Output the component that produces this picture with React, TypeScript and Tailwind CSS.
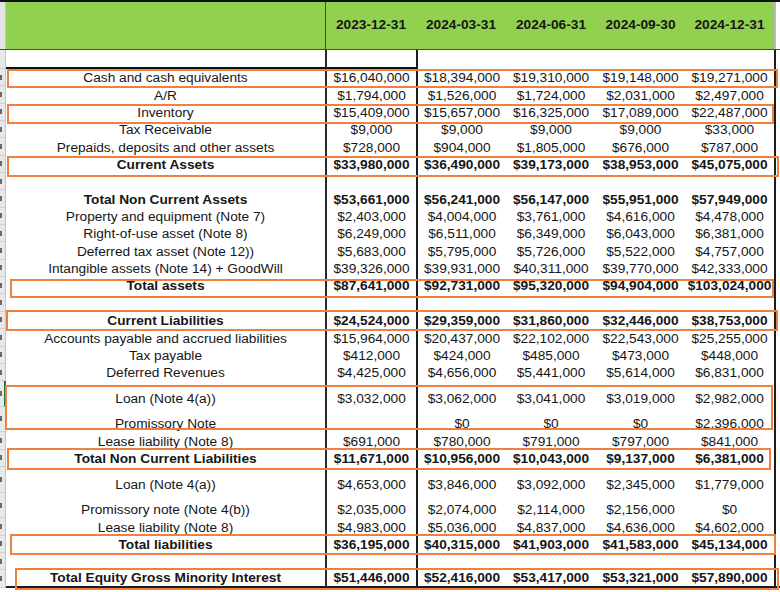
const DATES = ["2023-12-31", "2024-03-31", "2024-06-31", "2024-09-30", "2024-12-31"];

// widths of the five value columns (first and last carry the black rule)
const COLS = [
  "w-[91px] border-r-2 border-[#1c1c1c]",
  "w-[88px]",
  "w-[90px]",
  "w-[89px]",
  "w-[91px] border-r-2 border-[#1c1c1c]",
];

type Row = {
  label: string;
  vals: string[];
  bold?: boolean;
  h?: string;
};

const N = "h-[17.35px]";

const rows: Row[] = [
  { label: "Cash and cash equivalents", vals: ["$16,040,000", "$18,394,000", "$19,310,000", "$19,148,000", "$19,271,000"] },
  { label: "A/R", vals: ["$1,794,000", "$1,526,000", "$1,724,000", "$2,031,000", "$2,497,000"] },
  { label: "Inventory", vals: ["$15,409,000", "$15,657,000", "$16,325,000", "$17,089,000", "$22,487,000"] },
  { label: "Tax Receivable", vals: ["$9,000", "$9,000", "$9,000", "$9,000", "$33,000"] },
  { label: "Prepaids, deposits and other assets", vals: ["$728,000", "$904,000", "$1,805,000", "$676,000", "$787,000"] },
  { label: "Current Assets", bold: true, vals: ["$33,980,000", "$36,490,000", "$39,173,000", "$38,953,000", "$45,075,000"] },
  { label: "", vals: ["", "", "", "", ""] },
  { label: "Total Non Current Assets", bold: true, vals: ["$53,661,000", "$56,241,000", "$56,147,000", "$55,951,000", "$57,949,000"] },
  { label: "Property and equipment (Note 7)", vals: ["$2,403,000", "$4,004,000", "$3,761,000", "$4,616,000", "$4,478,000"] },
  { label: "Right-of-use asset (Note 8)", vals: ["$6,249,000", "$6,511,000", "$6,349,000", "$6,043,000", "$6,381,000"] },
  { label: "Deferred tax asset (Note 12))", vals: ["$5,683,000", "$5,795,000", "$5,726,000", "$5,522,000", "$4,757,000"] },
  { label: "Intangible assets (Note 14) + GoodWill", vals: ["$39,326,000", "$39,931,000", "$40,311,000", "$39,770,000", "$42,333,000"] },
  { label: "Total assets", bold: true, vals: ["$87,641,000", "$92,731,000", "$95,320,000", "$94,904,000", "$103,024,000"] },
  { label: "", vals: ["", "", "", "", ""] },
  { label: "Current Liabilities", bold: true, vals: ["$24,524,000", "$29,359,000", "$31,860,000", "$32,446,000", "$38,753,000"] },
  { label: "Accounts payable and accrued liabilities", vals: ["$15,964,000", "$20,437,000", "$22,102,000", "$22,543,000", "$25,255,000"] },
  { label: "Tax payable", vals: ["$412,000", "$424,000", "$485,000", "$473,000", "$448,000"] },
  { label: "Deferred Revenues", vals: ["$4,425,000", "$4,656,000", "$5,441,000", "$5,614,000", "$6,831,000"] },
  { label: "Loan (Note 4(a))", h: "h-[25.5px]", vals: ["$3,032,000", "$3,062,000", "$3,041,000", "$3,019,000", "$2,982,000"] },
  { label: "Promissory Note", h: "h-[25.5px]", vals: ["", "$0", "$0", "$0", "$2,396,000"] },
  { label: "Lease liability (Note 8)", vals: ["$691,000", "$780,000", "$791,000", "$797,000", "$841,000"] },
  { label: "Total Non Current Liabilities", bold: true, vals: ["$11,671,000", "$10,956,000", "$10,043,000", "$9,137,000", "$6,381,000"] },
  { label: "Loan (Note 4(a))", h: "h-[26px]", vals: ["$4,653,000", "$3,846,000", "$3,092,000", "$2,345,000", "$1,779,000"] },
  { label: "Promissory note (Note 4(b))", h: "h-[25.5px]", vals: ["$2,035,000", "$2,074,000", "$2,114,000", "$2,156,000", "$0"] },
  { label: "Lease liability (Note 8)", vals: ["$4,983,000", "$5,036,000", "$4,837,000", "$4,636,000", "$4,602,000"] },
  { label: "Total liabilities", bold: true, vals: ["$36,195,000", "$40,315,000", "$41,903,000", "$41,583,000", "$45,134,000"] },
  { label: "", vals: ["", "", "", "", ""] },
  { label: "Total Equity Gross Minority Interest", bold: true, vals: ["$51,446,000", "$52,416,000", "$53,417,000", "$53,321,000", "$57,890,000"] },
];

// pen-style boxes drawn on top of the sheet
const marks = [
  "left-[7px] top-[69px] w-[771px] h-[19px]",
  "left-[7px] top-[104px] w-[767px] h-[20px]",
  "left-[7px] top-[156px] w-[772px] h-[21px]",
  "left-[10px] top-[279px] w-[764px] h-[19px]",
  "left-[6px] top-[310px] w-[772px] h-[21px]",
  "left-[5px] top-[385px] w-[768px] h-[45px]",
  "left-[7px] top-[448px] w-[764px] h-[22px]",
  "left-[10px] top-[534px] w-[766px] h-[21px]",
  "left-[15px] top-[568px] w-[764px] h-[22px]",
];

// cropped row-number gutter of the sheet; only slivers of the digits show
function Strip({ tick, selected }: { tick?: boolean; selected?: boolean }) {
  return (
    <div
      className={`w-[6px] h-full shrink-0 flex items-center bg-[#e8e8e8] border-b border-[#cfcfcf] ${
        selected ? "border-r-2 border-r-[#217346]" : "border-r border-r-[#c4c4c4]"
      }`}
    >
      {tick && <span className="block w-[2px] h-[5px] bg-[#6a6a6a]" />}
    </div>
  );
}

function BodyRow({ row, idx, last }: { row: Row; idx: number; last?: boolean }) {
  const h = row.h ?? N;
  const weight = row.bold ? "font-bold" : "font-normal";
  const bottom = last ? "border-b-2 border-b-[#1c1c1c]" : "";
  return (
    <div className={`flex ${h}`}>
      <Strip tick selected={idx === 18} />
      <div className={`w-[321px] shrink-0 flex items-end justify-center border-r-2 border-[#2a2a2a] ${weight} ${bottom}`}>
        <span className="whitespace-nowrap leading-[16px]">{row.label}</span>
      </div>
      {row.vals.map((v, i) => (
        <div key={i} className={`${COLS[i]} shrink-0 flex items-end justify-center ${weight} ${bottom}`}>
          <span className="whitespace-nowrap leading-[16px]">{v}</span>
        </div>
      ))}
      <div className={`flex-1 ${bottom}`} />
    </div>
  );
}

export default function App() {
  return (
    <div
      className="relative w-[780px] h-[592px] overflow-hidden bg-white text-[13.7px] text-[#161616]"
      style={{ fontFamily: '"Liberation Sans", Arial, sans-serif' }}
    >
      <div className="h-[2px] bg-[#111]" />

      {/* header */}
      <div className="flex h-[47px]">
        <div className="w-[6px] shrink-0 bg-[#e3e3e3] border-r border-[#c4c4c4]" />
        <div className="w-[320px] shrink-0 bg-[#92d050] border-r border-[#3f4a33]" />
        <div className="flex bg-[#92d050] border-r-2 border-[#b9b9b9]">
          {DATES.map((d, i) => (
            <div
              key={d}
              className={`${["w-[90px]", "w-[90px]", "w-[90px]", "w-[89px]", "w-[89px]"][i]} flex items-center justify-center font-bold`}
            >
              {d}
            </div>
          ))}
        </div>
        <div className="flex-1" />
      </div>
      <div className="h-[1px] bg-[#4a4a4a]" />

      {/* spacer row with the heavy rule under it */}
      <div className="flex h-[19px]">
        <Strip />
        <div className="w-[321px] shrink-0 border-r-2 border-[#2a2a2a] border-b-2 border-b-[#111]" />
        <div className={`${COLS[0]} shrink-0 border-b-2 border-b-[#111]`} />
        <div className={`${COLS[1]} shrink-0`} />
        <div className={`${COLS[2]} shrink-0`} />
        <div className={`${COLS[3]} shrink-0`} />
        <div className={`${COLS[4]} shrink-0`} />
        <div className="flex-1" />
      </div>

      {rows.map((r, i) => (
        <BodyRow key={i} row={r} idx={i} last={i === rows.length - 1} />
      ))}

      {marks.map((m) => (
        <div key={m} className={`absolute ${m} border-2 border-[#ee8040] pointer-events-none`} />
      ))}
    </div>
  );
}
